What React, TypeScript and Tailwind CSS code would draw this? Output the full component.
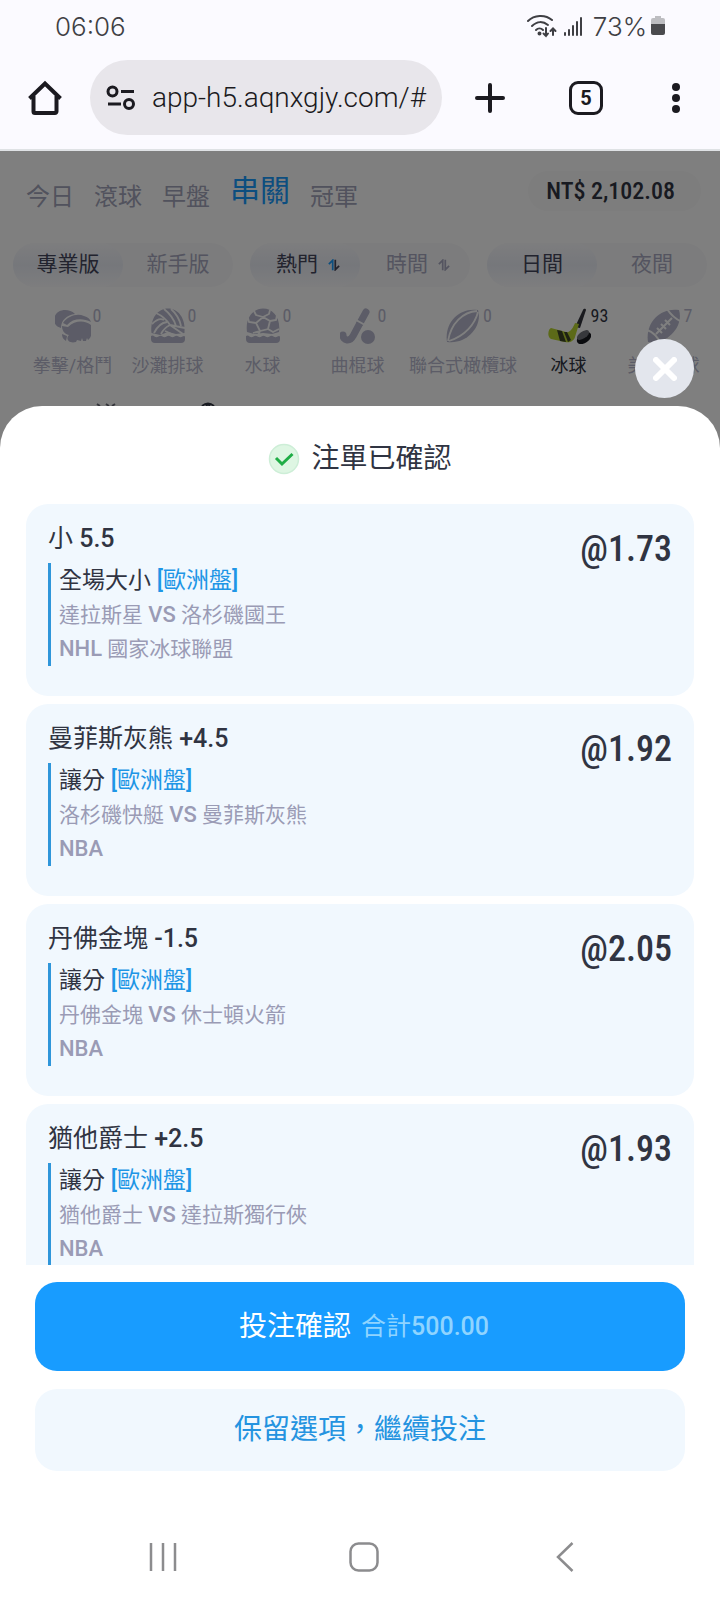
import type { ReactNode } from 'react';

interface Bet {
  pick: string;
  market: string;
  match: string;
  league: string;
  odds: string;
}

interface Sport {
  name: string;
  count: number;
  icon: ReactNode;
  active?: boolean;
}

const bets: Bet[] = [
  { pick: '小 5.5', market: '全場大小', match: '達拉斯星 VS 洛杉磯國王', league: 'NHL 國家冰球聯盟', odds: '1.73' },
  { pick: '曼菲斯灰熊 +4.5', market: '讓分', match: '洛杉磯快艇 VS 曼菲斯灰熊', league: 'NBA', odds: '1.92' },
  { pick: '丹佛金塊 -1.5', market: '讓分', match: '丹佛金塊 VS 休士頓火箭', league: 'NBA', odds: '2.05' },
  { pick: '猶他爵士 +2.5', market: '讓分', match: '猶他爵士 VS 達拉斯獨行俠', league: 'NBA', odds: '1.93' },
];

const tabs = ['今日', '滾球', '早盤', '串關', '冠軍'];

const iconClass = 'size-9';

const WaterLine = () => (
  <path d="M1 28 q2 -1 3.5 0.5 q2 1.5 4 0 q2 -1.5 4 0 q2 1.5 4 0 q2 -1.5 4 0 q2 1.5 4 0 q2 -1.5 4 0 q2 1.5 4 0 q1.500 -1 2.500 0 V31 a4 4 0 0 1 -4 4 H5 a4 4 0 0 1 -4 -4z" />
);

const sports: Sport[] = [
  {
    name: '拳擊/格鬥',
    count: 0,
    icon: (
      <svg viewBox="0 0 36 36" className={iconClass} fill="currentColor">
        <path d="M10 2 C4 2 -1 6 -1 12 C-1 16 2 19 6 20 C6 12 12 7 20 6 C17 3 14 2 10 2z" />
        <path d="M8 15 C13 8 22 5 29 8 C33 9 35 11 36 14 C28 10 18 10 12 17z" />
        <path d="M7 18 L13 19 C20 12 30 12 36 17 C38 24 36 30 33 32 L32 30 L31 33 L28 33 L27 30 L26 33 L22 32 L21 34 C14 36 10 31 14 27 C9 26 7 22 7 18z" />
        <path d="M7 26 L12 28 L11 33 C8 31 7 29 7 26z" />
      </svg>
    ),
  },
  {
    name: '沙灘排球',
    count: 0,
    icon: (
      <svg viewBox="0 0 36 36" className={iconClass} fill="currentColor">
        <path d="M1.500 25 C0 10 8 0.500 18 0.500 C28 0.500 36 10 34.500 25 L26 26 L18 24 L10 27z" />
        <g fill="none" stroke="#fff" strokeWidth="1.800">
          <path d="M6 5 Q15 9 20 17 M14 1 Q23 8 26 18 M21 1 Q29 8 31 18 M20 17 L35 20 M2 16 Q9 9 14 12 M4 25 Q9 15 17 14 M11 26 Q14 20 20 17 M20 17 L33 26 M15 23 L24 27" />
        </g>
        <WaterLine />
      </svg>
    ),
  },
  {
    name: '水球',
    count: 0,
    icon: (
      <svg viewBox="0 0 36 36" className={iconClass} fill="currentColor">
        <path d="M2 24 C0 10 8 0.500 18 0.500 C28 0.500 36 10 34 24 L27 26 L18 25 L9 26z" />
        <g fill="none" stroke="#fff" strokeWidth="1.800">
          <path d="M18 9 L25 13 L23 21 L15 23 L11 15z M18 9 L11 7 L9 3 M18 9 L24 6 L25 2 M25 13 L31 12 L32 7 M23 21 L28 24 L34 21 M15 23 L13 28 M11 15 L4 14 L3 10 M15 23 L8 25" />
        </g>
        <WaterLine />
      </svg>
    ),
  },
  {
    name: '曲棍球',
    count: 0,
    icon: (
      <svg viewBox="0 0 36 36" className={iconClass} fill="none" stroke="currentColor" strokeLinecap="round">
        <path d="M26 4 L20 15" strokeWidth="7" />
        <path d="M20 15 L13 28 C10 34 3 33 3 27" strokeWidth="7" />
        <path d="M16 12 L25 17" stroke="#fff" strokeWidth="2" />
        <circle cx="28" cy="29" r="7" fill="currentColor" stroke="none" />
      </svg>
    ),
  },
  {
    name: '聯合式橄欖球',
    count: 0,
    icon: (
      <svg viewBox="0 0 36 36" className={iconClass} fill="currentColor">
        <path d="M2 34 C-1 15 14 -1 33 2 C38 18 22 37 2 34z" />
        <g fill="none" stroke="#fff" strokeWidth="1.800">
          <path d="M3 33 C6 15 18 4 32 3 M4 33 C20 28 30 16 33 4" />
        </g>
      </svg>
    ),
  },
  {
    name: '冰球',
    count: 93,
    active: true,
    icon: (
      <svg viewBox="0 0 44 36" className="h-9 w-11">
        <path d="M33 20 L39 2 C39 1 37 0 36 2 L28 19z" fill="#33343c" />
        <path d="M32 16 L28 29 C27 33 23 35 18 34 L4 31 C0 29 1 21 4 20 L19 24 C23 25 26 20 28 15z" fill="#b8d430" />
        <path d="M10 22 L15 23 L19 34 L13 33z M17 24 L20 24 L24 32 L21 34z" fill="#3d4426" />
        <ellipse cx="37" cy="30" rx="8" ry="5" transform="rotate(-35 37 30)" fill="#17181f" />
        <ellipse cx="36" cy="27" rx="7" ry="3.500" transform="rotate(-35 36 27)" fill="#6f7078" />
      </svg>
    ),
  },
  {
    name: '美式足球',
    count: 7,
    icon: (
      <svg viewBox="0 0 36 36" className={iconClass} fill="currentColor">
        <path d="M2 34 C-1 15 14 -1 33 2 C38 18 22 37 2 34z" />
        <g fill="none" stroke="#fff" strokeWidth="2">
          <path d="M21 1 Q27 10 36 14 M1 22 Q10 25 15 36 M10 26 L26 10 M11 20 L16 25 M15 16 L20 21 M19 12 L24 17" />
        </g>
      </svg>
    ),
  },
];

function StatusBar() {
  return (
    <div className="flex h-[52px] shrink-0 items-center justify-between px-[55px] font-[Inter,sans-serif] text-[26px] font-light text-[#3f3f44]">
      <span>06:06</span>
      <div className="flex items-center gap-1">
        <svg viewBox="0 0 30 24" className="h-6 w-[30px]" fill="none" stroke="currentColor" strokeWidth="2" strokeLinecap="round">
          <path d="M1 7 C7 1 18 0 25 6" />
          <path d="M5 12 C10 7 16 7 21 11" />
          <path d="M9 16 C11 14 14 14 16 16" />
          <circle cx="12.500" cy="19.500" r="1" fill="currentColor" />
          <path d="M19 14 V22 M16.500 19.500 L19 22 L21 19.500" />
          <path d="M26 21 V15 M23.500 17 L26 14.500 L28.500 17" />
        </svg>
        <svg viewBox="0 0 20 22" className="ml-0.5 h-[22px] w-5" fill="currentColor">
          <rect x="1" y="17" width="2" height="4" rx="1" />
          <rect x="5" y="14" width="2" height="7" rx="1" />
          <rect x="9" y="10" width="2" height="11" rx="1" />
          <rect x="13" y="6" width="2" height="15" rx="1" />
          <rect x="17" y="2" width="2" height="19" rx="1" />
        </svg>
        <span className="ml-1.5">73%</span>
        <svg viewBox="0 0 14 20" className="h-5 w-3.5">
          <path d="M4 0 H10 V2 H12 A2 2 0 0 1 14 4 V8 H0 V4 A2 2 0 0 1 2 2 H4z" fill="#bdbdc1" />
          <path d="M0 8 H14 V17 A2 2 0 0 1 12 19 H2 A2 2 0 0 1 0 17z" fill="#4a4a4e" />
        </svg>
      </div>
    </div>
  );
}

function BrowserBar() {
  return (
    <div className="flex h-[99px] shrink-0 items-center border-b-2 border-[#dfe2e5] pr-0.5 pb-1.5 text-[#1b1a20]">
      <button aria-label="Home" className="flex w-[90px] justify-center">
        <svg viewBox="0 0 36 36" className="size-9" fill="none" stroke="currentColor" strokeWidth="4" strokeLinejoin="round">
          <path d="M2.500 18.500 L18 3.500 L33.500 18.500" strokeLinejoin="miter" />
          <path d="M6.500 16 V31.500 A1.500 1.500 0 0 0 8 33 H28 A1.500 1.500 0 0 0 29.500 31.500 V16" />
        </svg>
      </button>
      <div className="flex h-[75px] min-w-0 flex-1 items-center gap-4 rounded-full bg-[#e8e6eb] pr-3 pl-4">
        <svg viewBox="0 0 30 26" className="h-[26px] w-[30px] shrink-0" fill="none" stroke="currentColor" strokeWidth="3">
          <circle cx="6.500" cy="6.500" r="4.500" />
          <path d="M15 6.500 H28 M2 19 H15" />
          <circle cx="23" cy="19" r="4.500" />
        </svg>
        <input
          aria-label="Address"
          defaultValue="app-h5.aqnxgjy.com/#"
          className="w-full min-w-0 bg-transparent font-[Roboto,sans-serif] text-[28px] font-[350] outline-none"
        />
      </div>
      <button aria-label="New tab" className="flex w-24 justify-center">
        <svg viewBox="0 0 30 30" className="size-[30px]" fill="none" stroke="currentColor" strokeWidth="4" strokeLinecap="round">
          <path d="M15 2 V28 M2 15 H28" />
        </svg>
      </button>
      <button aria-label="Tabs" className="flex w-24 justify-center">
        <span className="flex size-[34px] items-center justify-center rounded-[9px] border-[3px] border-current font-[Roboto,sans-serif] text-xl leading-none font-bold">
          5
        </span>
      </button>
      <button aria-label="Menu" className="flex w-[84px] justify-center">
        <svg viewBox="0 0 8 32" className="h-8 w-2" fill="currentColor">
          <circle cx="4" cy="5" r="4" />
          <circle cx="4" cy="16" r="4" />
          <circle cx="4" cy="27" r="4" />
        </svg>
      </button>
    </div>
  );
}

function SortIcon({ active }: { active?: boolean }) {
  return (
    <svg viewBox="0 0 14 14" className="size-3" fill="none" strokeWidth="2">
      <path d="M1 6 L5.500 1.500 V13" stroke={active ? '#189cff' : 'currentColor'} />
      <path d="M8.500 1 V12.500 L13 8" stroke="currentColor" />
    </svg>
  );
}

function Segment({ options, sortable }: { options: string[]; sortable?: boolean }) {
  return (
    <div className="flex h-11 flex-1 rounded-full bg-[#f9f9fb] text-[21px]">
      {options.map((option, i) => (
        <button
          key={option}
          className={
            i === 0
              ? 'flex flex-1 items-center justify-center rounded-full bg-linear-to-b from-[#fbfbfd] via-[#eceff7] to-[#fbfbfd] text-[#44475c]'
              : 'flex flex-1 items-center justify-center rounded-full text-[#a8a9c0]'
          }
        >
          {sortable ? (
            <span className="flex items-center gap-2.5 pl-1.5">
              {option}
              <SortIcon active={i === 0} />
            </span>
          ) : (
            option
          )}
        </button>
      ))}
    </div>
  );
}

function SportsPage() {
  return (
    <div className="overflow-hidden pt-4">
      <div className="flex items-center justify-between pr-[19px] pl-[26px]">
        <nav className="flex items-end gap-5">
          {tabs.map((tab) => (
            <a
              key={tab}
              href="#"
              className={tab === '串關' ? 'text-[30px] leading-[48px] text-[#189cff]' : 'text-2xl leading-9 text-[#a3a4ba]'}
            >
              {tab}
            </a>
          ))}
        </nav>
        <div className="flex h-10 items-center rounded-full bg-[#fafafa] pr-[26px] pl-[18px] font-['Roboto_Condensed',Roboto,sans-serif] text-2xl font-medium text-[#303442]">
          NT$ 2,102.08
        </div>
      </div>

      <div className="mt-7 flex gap-[17px] px-[13px]">
        <Segment options={['專業版', '新手版']} />
        <Segment options={['熱門', '時間']} sortable />
        <Segment options={['日間', '夜間']} />
      </div>

      <div className="mt-[21px] flex pl-[25px]">
        {sports.map((sport) => (
          <button
            key={sport.name}
            className={
              sport.active
                ? 'flex min-w-[95px] shrink-0 flex-col items-center px-1 text-[#303442]'
                : 'flex min-w-[95px] shrink-0 flex-col items-center px-1 text-[#b8b9ce]'
            }
          >
            <span className="relative">
              {sport.icon}
              <span
                className={
                  sport.active
                    ? "absolute -top-1 right-0 translate-x-full font-['Roboto_Condensed',Roboto,sans-serif] text-lg leading-6"
                    : "absolute -top-1 left-full pl-0.5 font-['Roboto_Condensed',Roboto,sans-serif] text-lg leading-6"
                }
              >
                {sport.count}
              </span>
            </span>
            <span className="mt-2.5 text-lg leading-6 whitespace-nowrap">{sport.name}</span>
          </button>
        ))}
      </div>

      {/* first row of matches, mostly hidden by the slip */}
      <svg viewBox="0 0 220 5" className="mt-[23px] h-[5px] w-[220px]" fill="none" strokeWidth="2">
        <path d="M97 3 L100 5 M106 3 L109 5 M115 3 L112 5" stroke="#6b6c78" />
        <path d="M202 5 Q208 0 214 5 M206 5 L208 3 L210 5" stroke="#303442" />
      </svg>
    </div>
  );
}

// Latin runs are set heavier than the Chinese around them
function MixedText({ text, latin = 'font-medium' }: { text: string; latin?: string }) {
  return text.split(/([A-Z0-9+\-.]+)/).map((part, i) =>
    i % 2 === 1 ? (
      <span key={i} className={latin}>
        {part}
      </span>
    ) : (
      part
    )
  );
}

function BetCard({ pick, market, match, league, odds }: Bet) {
  return (
    <li className="flex shrink-0 items-start justify-between rounded-[22px] bg-[#f1f8fe] px-[22px] pt-[17px] pb-[30px]">
      <div>
        <h3 className="text-[25px] leading-9 text-[#303442]">
          <MixedText text={pick} />
        </h3>
        <div className="mt-1.5 border-l-3 border-[#2f96da] pl-2">
          <p className="text-[23px] leading-[35px] text-[#303442]">
            {market}{' '}
            <span className="text-[#1e96e6]">
              <span className="font-medium">[</span>歐洲盤<span className="font-medium">]</span>
            </span>
          </p>
          <p className="text-[21px] leading-[34px] text-[#9a9bb5]">
            <MixedText text={match} latin="text-[22px] font-medium" />
          </p>
          <p className="text-[21px] leading-[34px] text-[#9a9bb5]">
            <MixedText text={league} latin="text-[22px] font-medium" />
          </p>
        </div>
      </div>
      <span className="pt-1 font-['Roboto_Condensed',Roboto,sans-serif] text-[36px] leading-[48px] font-medium text-[#303442]">
        @{odds}
      </span>
    </li>
  );
}

function BetSlip() {
  return (
    <section className="relative flex min-h-0 flex-1 flex-col rounded-t-[42px] bg-white">
      <button
        aria-label="Close"
        className="absolute -top-[67px] right-[26px] flex size-[59px] items-center justify-center rounded-full bg-[#e3e6ed]"
      >
        <svg viewBox="0 0 24 24" className="size-6" fill="none" stroke="#fff" strokeWidth="6" strokeLinecap="round">
          <path d="M3 3 L21 21 M21 3 L3 21" />
        </svg>
      </button>

      <div className="flex h-[98px] shrink-0 items-center justify-center gap-[11px] pt-2">
        <svg viewBox="0 0 32 32" className="size-8" fill="none">
          <circle cx="16" cy="16" r="14.500" fill="#def6e3" stroke="#cdeed7" strokeWidth="1.500" />
          <path d="M8 15 L14 21 L24.500 11" stroke="#1fad46" strokeWidth="3" />
        </svg>
        <h2 className="text-[28px] leading-10 text-[#303442]">注單已確認</h2>
      </div>

      <ul className="mx-[26px] flex min-h-0 flex-1 flex-col gap-2 overflow-y-auto [scrollbar-width:none]">
        {bets.map((bet) => (
          <BetCard key={bet.pick} {...bet} />
        ))}
      </ul>

      <div className="flex shrink-0 flex-col gap-[18px] px-[35px] pt-[17px] pb-[43px]">
        <button className="flex h-[89px] items-center justify-center gap-2.5 rounded-[22px] bg-[#189cff] pl-2 text-[28px] text-white">
          投注確認
          <span className="text-[25px] text-[#8fd4ff]">
            合計<span className="font-medium">500.00</span>
          </span>
        </button>
        <button className="h-[82px] rounded-[22px] bg-[#f1f8fe] text-[28px] text-[#2493e0]">保留選項，繼續投注</button>
      </div>
    </section>
  );
}

function SystemNav() {
  return (
    <div className="relative flex h-[86px] shrink-0 items-center bg-white pr-[54px] pl-[62px] text-[#8c8c8e]">
      <button aria-label="Recents" className="flex flex-1 justify-center">
        <svg viewBox="0 0 28 30" className="h-[30px] w-7" fill="none" stroke="currentColor" strokeWidth="2.500">
          <path d="M2 1 V29 M14 1 V29 M26 1 V29" />
        </svg>
      </button>
      <button aria-label="Home screen" className="flex flex-1 justify-center">
        <svg viewBox="0 0 30 30" className="size-[30px]" fill="none" stroke="currentColor" strokeWidth="2.500">
          <rect x="1.500" y="1.500" width="27" height="27" rx="8" />
        </svg>
      </button>
      <button aria-label="Back" className="flex flex-1 justify-center">
        <svg viewBox="0 0 18 30" className="h-[30px] w-[18px]" fill="none" stroke="currentColor" strokeWidth="2.500">
          <path d="M16.500 1 L2 15 L16.500 29" />
        </svg>
      </button>
    </div>
  );
}

function App() {
  return (
    <div className="flex h-screen flex-col bg-[#fbfaff] font-['Roboto','Noto_Sans_CJK_TC',sans-serif]">
      <StatusBar />
      <BrowserBar />
      <main className="relative flex min-h-0 flex-1 flex-col bg-white">
        <SportsPage />
        <div className="absolute inset-0 bg-black/50" />
        <BetSlip />
        <SystemNav />
      </main>
    </div>
  );
}

export default App;
